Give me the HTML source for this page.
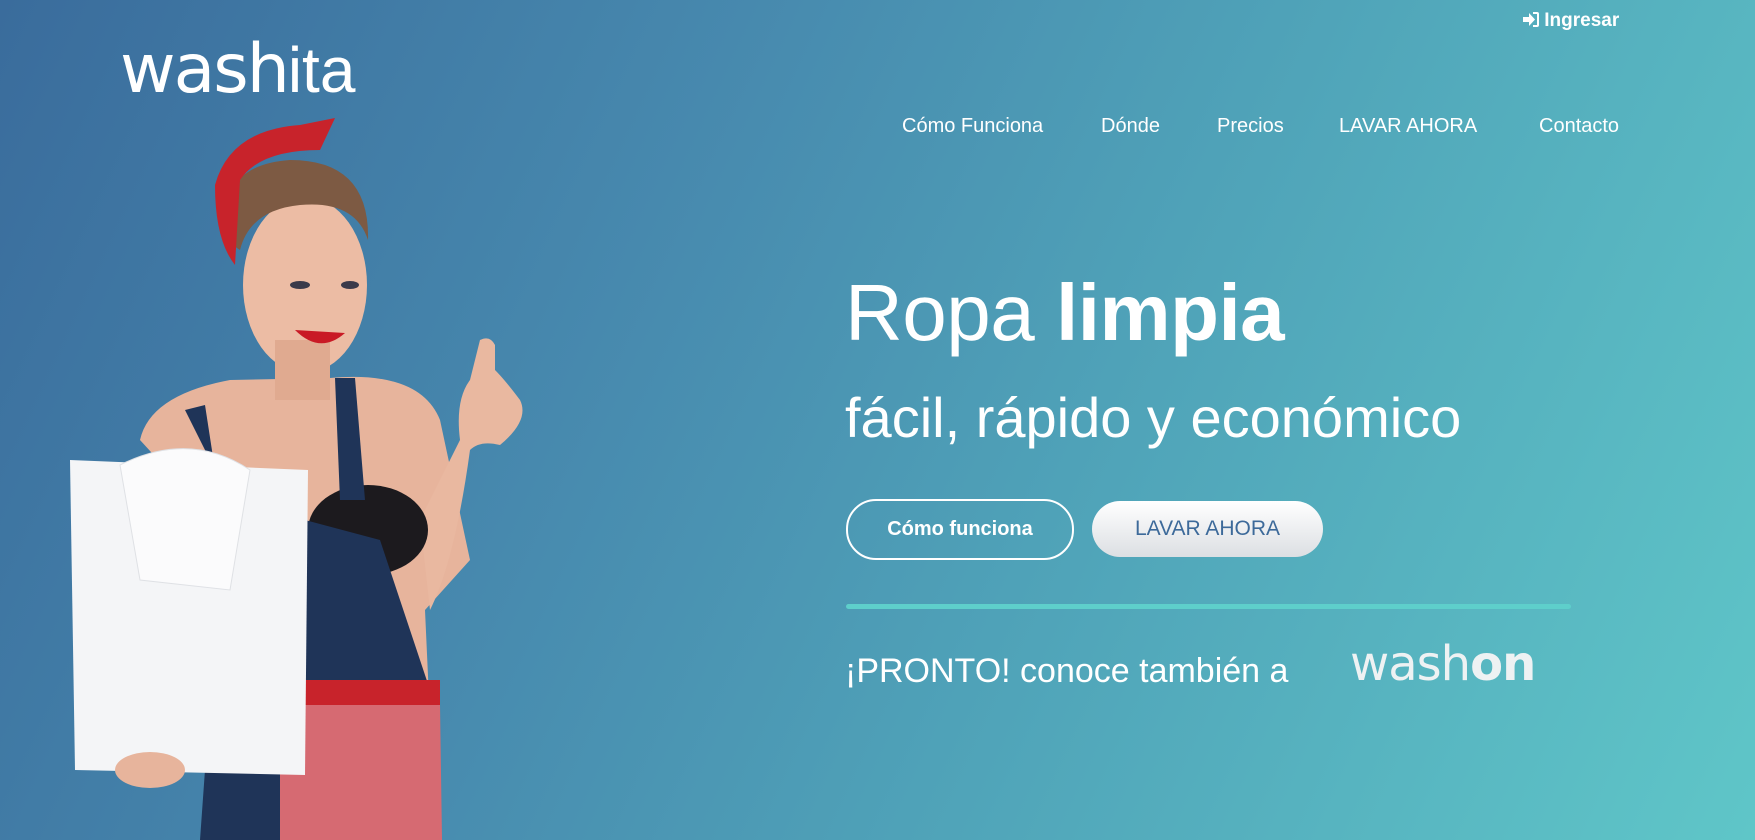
<!DOCTYPE html>
<html><head><meta charset="utf-8">
<style>
html,body{margin:0;padding:0;}
body{width:1755px;height:840px;overflow:hidden;position:relative;font-family:"Liberation Sans",sans-serif;color:#fff;
background:linear-gradient(115deg,#3a6c9c 0%,#4789ae 35%,#4fa2b8 60%,#5fc6c8 100%);}
.abs{position:absolute;white-space:nowrap;}
.nav{top:115px;font-size:20px;}
.logo{left:120px;top:30px;font-size:68px;letter-spacing:-2px;font-family:"DejaVu Sans","Liberation Sans",sans-serif;}
.btn{position:absolute;border-radius:30px;font-size:21px;text-align:center;box-sizing:border-box;}
</style></head><body>
<div class="abs logo"><span style="font-weight:400">wash</span><span style="font-weight:300;font-family:'Liberation Sans',sans-serif;font-size:64px;letter-spacing:0">ita</span></div>

<div class="abs" style="left:1523px;top:10px;font-size:19px;font-weight:bold;">
<svg width="16" height="15" viewBox="0 0 16 15" style="vertical-align:-1px"><path d="M0 5h6V1l6 6.5-6 6.5V10H0z" fill="#fff"/><path d="M10 0h4a2 2 0 0 1 2 2v11a2 2 0 0 1-2 2h-4v-2h4V2h-4z" fill="#fff"/></svg> Ingresar</div>

<div class="abs nav" style="left:902px">Cómo Funciona</div>
<div class="abs nav" style="left:1101px">Dónde</div>
<div class="abs nav" style="left:1217px">Precios</div>
<div class="abs nav" style="left:1339px">LAVAR AHORA</div>
<div class="abs nav" style="left:1539px">Contacto</div>

<div class="abs" style="left:845px;top:267px;font-size:80px;font-weight:300;letter-spacing:-0.5px">Ropa <b style="font-weight:700">limpia</b></div>
<div class="abs" style="left:845px;top:385px;font-size:56px;font-weight:300;">fácil, rápido y económico</div>

<div class="btn" style="left:846px;top:499px;width:228px;height:61px;border:2px solid #fff;line-height:57px;font-weight:bold;font-size:20px">Cómo funciona</div>
<div class="btn" style="left:1092px;top:501px;width:231px;height:56px;background:linear-gradient(#fff,#dcdfe3);color:#3d6a9a;line-height:56px;">LAVAR AHORA</div>

<div class="abs" style="left:846px;top:604px;width:725px;height:5px;border-radius:3px;background:#5ecfcb;"></div>
<div class="abs" style="left:845px;top:652px;font-size:34px;font-weight:300;">¡PRONTO! conoce también a</div>
<div class="abs" style="left:1350px;top:636px;font-size:48px;letter-spacing:-1px;color:#eef2f3;font-family:'DejaVu Sans',sans-serif;">wash<b>on</b></div>

<svg class="abs" style="left:0;top:0" width="560" height="840" viewBox="0 0 560 840">
<path d="M140 440 Q150 395 230 380 L330 378 Q420 370 440 420 L470 560 L425 610 L430 720 L300 720 L250 560 Z" fill="#e7b49c"/>
<path d="M430 610 Q455 560 470 450 Q480 440 500 445 Q530 420 520 400 Q505 380 495 370 L495 345 Q490 335 480 340 L470 380 Q455 400 460 440 L420 520 Z" fill="#e9b8a0"/>
<ellipse cx="305" cy="285" rx="62" ry="88" fill="#ecbca4"/>
<rect x="275" y="340" width="55" height="60" fill="#e0aa90"/>
<path d="M225 240 Q215 165 290 160 Q370 160 368 240 Q355 200 300 205 Q250 210 240 250 Z" fill="#7d5a43"/>
<path d="M215 185 Q230 130 300 125 L335 118 L320 150 Q260 150 240 180 L235 265 Q215 240 215 185 Z" fill="#c8232b"/>
<ellipse cx="300" cy="285" rx="10" ry="4" fill="#3a3a4a"/><ellipse cx="350" cy="285" rx="9" ry="4" fill="#3a3a4a"/>
<path d="M295 330 Q320 355 345 333 Z" fill="#c91a25"/>
<ellipse cx="368" cy="530" rx="60" ry="45" fill="#1c1a1e"/>
<path d="M185 410 L205 405 L215 470 Z" fill="#1f3458"/>
<path d="M335 378 L355 378 L365 500 L340 500 Z" fill="#1f3458"/>
<path d="M305 520 L380 540 L430 690 L300 700 L300 840 L200 840 L210 700 Z" fill="#1f3458"/>
<rect x="298" y="680" width="142" height="28" fill="#c8232b"/>
<path d="M280 705 L440 705 L442 840 L280 840 Z" fill="#d66a72"/>
<path d="M70 460 L308 470 L305 775 L75 770 Z" fill="#f4f5f7"/>
<path d="M120 465 Q190 430 250 470 L230 590 L140 580 Z" fill="#fbfbfc" stroke="#dfe1e5"/>
<ellipse cx="150" cy="770" rx="35" ry="18" fill="#e7b49c"/>
</svg>
</body></html>
